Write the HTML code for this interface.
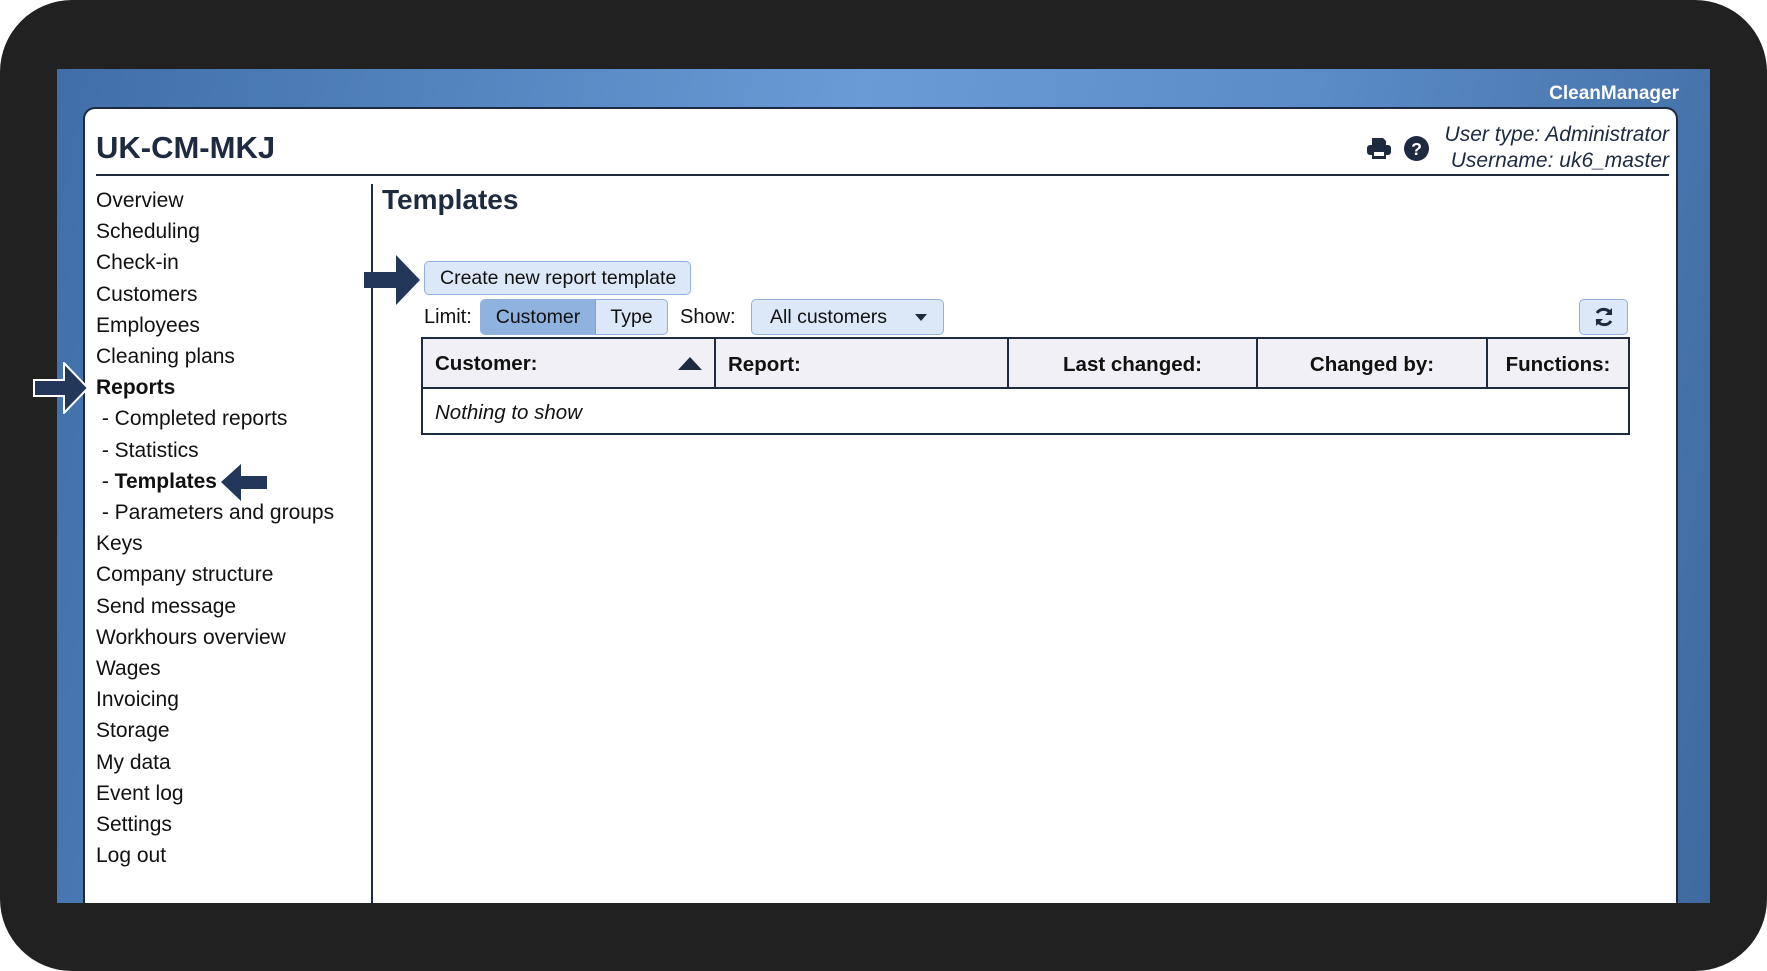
<!DOCTYPE html>
<html><head><style>
*{margin:0;padding:0;box-sizing:border-box}
body{width:1767px;height:971px;background:#fff;position:relative;overflow:hidden;font-family:"Liberation Sans",Arial,sans-serif;color:#111}
.frame{position:absolute;left:0;top:0;width:1767px;height:971px;background:#212121;border-radius:72px}
.blue{position:absolute;left:57px;top:69px;width:1653px;height:834px;background:linear-gradient(100deg,#3f6ea8 0%,#6a9bd6 45%,#5b8cc8 70%,#3f6aa0 100%)}
.cm{position:absolute;right:88px;top:83px;color:#fff;font-weight:bold;font-size:19px}
.panel{position:absolute;left:83px;top:107px;width:1595px;height:796px;background:#fff;border:2px solid #1d2a40;border-bottom:none;border-radius:12px 12px 0 0}
.abs{position:absolute}
.nav{position:absolute;left:96px;top:185px;font-size:21px;line-height:31.2px;color:#111}
.nav b{font-weight:bold}
.btn{position:absolute;background:#dce8f7;border:1.5px solid #8fb2de;border-radius:5px;font-size:19.5px;color:#111;display:flex;align-items:center}
</style></head><body>
<div class="frame"></div>
<div class="blue"></div>
<div class="cm">CleanManager</div>
<div class="panel"></div>
<div class="abs" style="left:96px;top:130px;font-size:31px;font-weight:bold;color:#1d2a40">UK-CM-MKJ</div>
<div class="abs" style="left:96px;top:174px;width:1573px;height:2px;background:#1d2a40"></div>
<div class="abs" style="right:98px;top:122px;font-style:italic;font-size:21px;text-align:right;line-height:26px;color:#1d2a40">User type: Administrator<br>Username: uk6_master</div>
<svg class="abs" style="left:1366px;top:136px" width="26" height="24" viewBox="0 0 26 24"><path d="M6 2h11l3 3v5H6z" fill="#1d2a40"/><rect x="1" y="9" width="24" height="10" rx="3" fill="#1d2a40"/><rect x="6" y="15" width="14" height="8" fill="#1d2a40"/><rect x="8" y="16" width="10" height="4" fill="#fff"/></svg>
<svg class="abs" style="left:1404px;top:136px" width="25" height="25" viewBox="0 0 24 24"><circle cx="12" cy="12" r="12" fill="#1d2a40"/><text x="12" y="18" text-anchor="middle" font-family="Liberation Sans" font-weight="bold" font-size="17" fill="#fff">?</text></svg>
<div class="abs" style="left:371px;top:184px;width:2px;height:719px;background:#1d2a40"></div>
<div class="nav">Overview<br>Scheduling<br>Check-in<br>Customers<br>Employees<br>Cleaning plans<br><b>Reports</b><br>&nbsp;- Completed reports<br>&nbsp;- Statistics<br>&nbsp;- <b>Templates</b><br>&nbsp;- Parameters and groups<br>Keys<br>Company structure<br>Send message<br>Workhours overview<br>Wages<br>Invoicing<br>Storage<br>My data<br>Event log<br>Settings<br>Log out</div>
<div class="abs" style="left:382px;top:184px;font-size:28px;font-weight:bold;color:#1d2a40">Templates</div>
<div class="btn" style="left:424px;top:261px;width:267px;height:34px;padding-left:15px">Create new report template</div>
<div class="abs" style="left:424px;top:306px;font-size:20px">Limit:</div>
<div class="btn" style="left:480px;top:299px;width:188px;height:36px;overflow:hidden;padding:0"><div style="width:115px;height:100%;background:#8fb2de;display:flex;align-items:center;justify-content:center;border-right:1px solid #7fa3d0">Customer</div><div style="flex:1;text-align:center">Type</div></div>
<div class="abs" style="left:680px;top:306px;font-size:20px">Show:</div>
<div class="btn" style="left:751px;top:299px;width:193px;height:36px;padding-left:18px">All customers<svg style="position:absolute;right:16px;top:14px" width="12" height="8"><path d="M0 0h12L6 7z" fill="#1d2a40"/></svg></div>
<div class="btn" style="left:1579px;top:299px;width:49px;height:36px;justify-content:center"><svg width="24" height="24" viewBox="0 0 24 24" fill="none" stroke="#1d2a40" stroke-width="3"><path d="M19 9A8 8 0 0 0 5 8"/><path d="M5 15a8 8 0 0 0 14 1"/><path d="M20 3v7h-7z" fill="#1d2a40" stroke="none"/><path d="M4 21v-7h7z" fill="#1d2a40" stroke="none"/></svg></div>
<div class="abs" style="left:421px;top:337px;width:1209px;height:98px;border:2px solid #1d2a40">
 <div class="abs" style="left:0;top:0;width:1205px;height:50px;background:#f0f0f6;border-bottom:2px solid #1d2a40"></div>
 <div class="abs" style="left:291px;top:0;width:2px;height:50px;background:#1d2a40"></div>
 <div class="abs" style="left:584px;top:0;width:2px;height:50px;background:#1d2a40"></div>
 <div class="abs" style="left:833px;top:0;width:2px;height:50px;background:#1d2a40"></div>
 <div class="abs" style="left:1063px;top:0;width:2px;height:50px;background:#1d2a40"></div>
 <div class="abs" style="left:12px;top:13px;font-weight:bold;font-size:20.5px">Customer:</div>
 <svg class="abs" style="left:255px;top:18px" width="24" height="13"><path d="M0 13L12 0l12 13z" fill="#1d2a40"/></svg>
 <div class="abs" style="left:305px;top:14px;font-weight:bold;font-size:20.5px">Report:</div>
 <div class="abs" style="left:586px;width:247px;top:14px;text-align:center;font-weight:bold;font-size:20.5px">Last changed:</div>
 <div class="abs" style="left:835px;width:228px;top:14px;text-align:center;font-weight:bold;font-size:20.5px">Changed by:</div>
 <div class="abs" style="left:1065px;width:140px;top:14px;text-align:center;font-weight:bold;font-size:20.5px">Functions:</div>
 <div class="abs" style="left:12px;top:62px;font-style:italic;font-size:20.5px">Nothing to show</div>
</div>
<svg class="abs" style="left:33px;top:362px" width="56" height="52"><path d="M1 18h30V1l24 25-24 25V34H1z" fill="#23375a" stroke="#fff" stroke-width="2"/></svg>
<svg class="abs" style="left:364px;top:255px" width="56" height="50"><path d="M0 17h32V0l24 25-24 25V33H0z" fill="#23375a"/></svg>
<svg class="abs" style="left:221px;top:464px" width="46" height="37"><path d="M46 12H20V0L0 18l20 19V25h26z" fill="#23375a"/></svg>
</body></html>
